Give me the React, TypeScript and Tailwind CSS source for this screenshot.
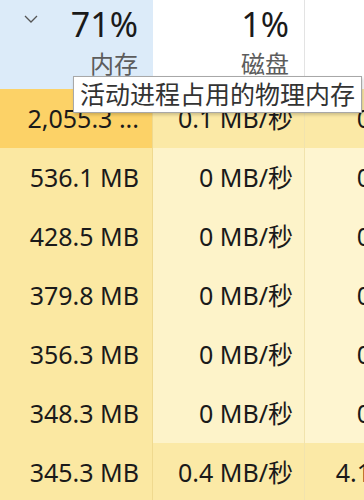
import React from 'react';

type Row = { mem: string; disk: string; net: string; hot?: boolean; busy?: boolean };

const rows: Row[] = [
    { mem: '2,055.3 ...', disk: '0.1 MB/秒', net: '0 Mbps', hot: true, busy: true },
    { mem: '536.1 MB', disk: '0 MB/秒', net: '0 Mbps' },
    { mem: '428.5 MB', disk: '0 MB/秒', net: '0 Mbps' },
    { mem: '379.8 MB', disk: '0 MB/秒', net: '0 Mbps' },
    { mem: '356.3 MB', disk: '0 MB/秒', net: '0 Mbps' },
    { mem: '348.3 MB', disk: '0 MB/秒', net: '0 Mbps' },
    { mem: '345.3 MB', disk: '0.4 MB/秒', net: '4.1 Mbps', busy: true },
];

const font = { fontFamily: '"Noto Sans", "Noto Sans CJK SC", sans-serif' };

export default function App() {
    return (
        <div className="relative w-[364px] h-[500px] overflow-hidden bg-white text-[#1a1a1a]" style={font}>
            {/* Header */}
            <div className="flex h-[89px]">
                <div className="w-[153px] shrink-0 flex bg-[#dcebf9]">
                    <svg width="14" height="9" viewBox="0 0 14 9" className="ml-[24px] mt-[15px] shrink-0">
                        <polyline points="1,1 7,7 13,1" fill="none" stroke="#555" strokeWidth="1.3" />
                    </svg>
                    <div className="flex-1 flex flex-col items-end pr-[15px] pt-[2px]">
                        <span className="text-[34px] leading-[44px]">71%</span>
                        <span className="text-[24px] leading-[36px] text-[#5c5c5c]">内存</span>
                    </div>
                </div>
                <div className="w-[152px] shrink-0 flex flex-col items-end pr-[15px] pt-[2px] border-r border-[#e3e3e3]">
                    <span className="text-[34px] leading-[44px]">1%</span>
                    <span className="text-[24px] leading-[36px] text-[#5c5c5c]">磁盘</span>
                </div>
                <div className="w-[152px] shrink-0" />
            </div>

            {/* Rows */}
            {rows.map((r, i) => (
                <div key={i} className="flex h-[59px] text-[25px]">
                    <div className={`w-[153px] shrink-0 flex items-center justify-end pr-[13px] border-r border-[#efd98f] ${r.hot ? 'bg-[#fcd267]' : 'bg-[#fbe8a2]'}`}>
                        {r.mem}
                    </div>
                    <div className={`w-[152px] shrink-0 flex items-center justify-end pr-[11px] border-r border-[#f1e3ad] ${r.busy ? 'bg-[#fbe9a6]' : 'bg-[#fdf3c9]'}`}>
                        {r.disk}
                    </div>
                    <div className={`w-[152px] shrink-0 flex items-center justify-end pr-[14px] ${r.busy ? 'bg-[#fbe9a6]' : 'bg-[#fef5d0]'}`}>
                        {r.net}
                    </div>
                </div>
            ))}

            {/* Tooltip */}
            <div className="absolute left-[73px] top-[76px] h-[37px] px-[6px] flex items-center bg-white border border-[#a8a8a8] shadow-[1px_2px_3px_rgba(0,0,0,0.18)] text-[25px] leading-none text-[#333] whitespace-nowrap">
                活动进程占用的物理内存
            </div>
        </div>
    );
}
